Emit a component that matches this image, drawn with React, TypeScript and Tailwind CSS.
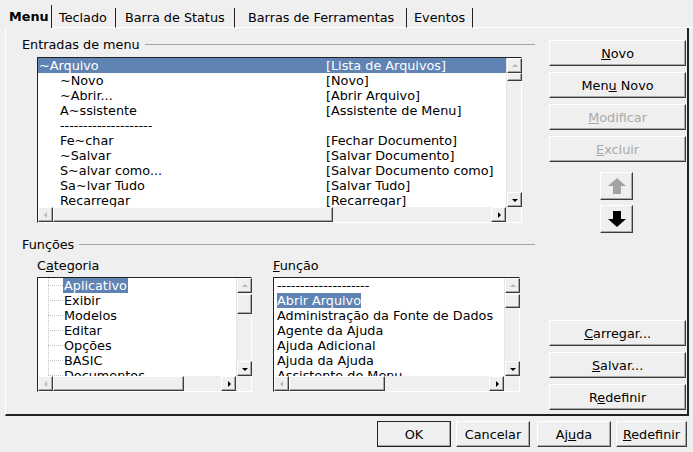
import React from "react"

const raised =
  "border border-t-white border-l-white border-b-[#3c3c3c] border-r-[#3c3c3c] shadow-[inset_-1px_-1px_0_#a8a8a8] bg-[#efefef]"

function Btn({ children, disabled, className = "" }: { children: React.ReactNode; disabled?: boolean; className?: string }) {
  return (
    <div
      className={`${raised} h-[26px] flex items-center justify-center ${disabled ? "text-[#a9a9a9]" : "text-black"} ${className}`}
    >
      <span className="whitespace-pre">{children}</span>
    </div>
  )
}

function Arrow({ dir, disabled }: { dir: "up" | "down" | "left" | "right"; disabled?: boolean }) {
  const c = disabled ? "#b8b8b8" : "#000"
  const pts = {
    up: "2,6 5,3 8,6",
    down: "2,4 8,4 5,7",
    left: "6,2 6,8 3,5",
    right: "4,2 4,8 7,5",
  }[dir]
  return (
    <div className={`${raised} w-[15px] h-[15px] flex items-center justify-center shrink-0`}>
      <svg width="10" height="10" viewBox="0 0 10 10">
        <polygon points={pts} fill={c} />
      </svg>
    </div>
  )
}

function VScroll({ thumbTop, thumbH }: { thumbTop: number; thumbH: number }) {
  return (
    <div className="w-[15px] flex flex-col bg-[#efefef] border-l border-[#e4e4e4]">
      <Arrow dir="up" disabled />
      <div className="flex-1 relative">
        <div className={`${raised} absolute left-0 w-[15px]`} style={{ top: thumbTop, height: thumbH }} />
      </div>
      <Arrow dir="down" />
    </div>
  )
}

function HScroll({ thumbW }: { thumbW: number }) {
  return (
    <div className="h-[15px] flex bg-[#efefef]">
      <Arrow dir="left" disabled />
      <div className="flex-1 flex">
        <div className={`${raised} h-[15px]`} style={{ width: thumbW }} />
      </div>
      <Arrow dir="right" />
      <div className="w-[15px] shrink-0" />
    </div>
  )
}

function ListBox({
  w,
  h,
  thumbTop,
  thumbH,
  hThumb,
  children,
}: {
  w: number
  h: number
  thumbTop: number
  thumbH: number
  hThumb: number
  children: React.ReactNode
}) {
  return (
    <div
      className="border border-t-[#222] border-l-[#222] border-b-white border-r-white bg-white flex flex-col"
      style={{ width: w, height: h }}
    >
      <div className="flex-1 flex min-h-0">
        <div className="flex-1 overflow-hidden">{children}</div>
        <VScroll thumbTop={thumbTop} thumbH={thumbH} />
      </div>
      <HScroll thumbW={hThumb} />
    </div>
  )
}

const menuRows: [string, string, boolean][] = [
  ["~Arquivo", "[Lista de Arquivos]", false],
  ["~Novo", "[Novo]", true],
  ["~Abrir...", "[Abrir Arquivo]", true],
  ["A~ssistente", "[Assistente de Menu]", true],
  ["--------------------", "", true],
  ["Fe~char", "[Fechar Documento]", true],
  ["~Salvar", "[Salvar Documento]", true],
  ["S~alvar como...", "[Salvar Documento como]", true],
  ["Sa~lvar Tudo", "[Salvar Tudo]", true],
  ["Recarregar", "[Recarregar]", true],
]

const categories = ["Aplicativo", "Exibir", "Modelos", "Editar", "Opções", "BASIC", "Documentos"]
const functions = [
  "--------------------",
  "Abrir Arquivo",
  "Administração da Fonte de Dados",
  "Agente da Ajuda",
  "Ajuda Adicional",
  "Ajuda da Ajuda",
  "Assistente de Menu",
]

function Section({ title, children }: { title: string; children: React.ReactNode }) {
  return (
    <div>
      <div className="flex items-center gap-[5px] h-[14px]">
        <span>{title}</span>
        <div className="flex-1 h-0 border-t border-[#a5a5a5]" />
      </div>
      {children}
    </div>
  )
}

const tabCls = "h-[20px] flex items-center border-r border-[#222] border-b border-b-white whitespace-nowrap"

export default function App() {
  return (
    <div
      className="w-[693px] h-[452px] bg-[#efefef] text-black text-[12.8px] leading-[15px] relative overflow-hidden"
      style={{ fontFamily: '"DejaVu Sans", Verdana, sans-serif' }}
    >
      {/* Tabs */}
      <div className="flex items-end h-[28px] pl-[4px] pt-[5px]">
        <div className="h-[23px] w-[48px] pl-[5px] flex items-center font-bold border-r border-[#222] relative z-10 bg-[#efefef]">
          Menu
        </div>
        <div className={`${tabCls} w-[64px] pl-[7px]`}>Teclado</div>
        <div className={`${tabCls} w-[119px] pl-[9px]`}>Barra de Status</div>
        <div className={`${tabCls} w-[172px] pl-[13px]`}>Barras de Ferramentas</div>
        <div className={`${tabCls} w-[66px] pl-[7px]`}>Eventos</div>
        <div className="flex-1 border-b border-white h-[20px]" />
      </div>

      {/* Panel */}
      <div className="mx-[5px] w-[684px] h-[388px] border-l border-l-white border-b-2 border-r-2 border-b-[#222] border-r-[#222] flex pl-[16px] pt-[9px] pr-[1px]">
        <div className="w-[514px] flex flex-col">
          <Section title="Entradas de menu">
            <div className="pl-[15px] pt-[6px]">
              <ListBox w={485} h={166} thumbTop={0} thumbH={8} hThumb={280}>
                {menuRows.map(([a, b, ind], i) => (
                  <div
                    key={i}
                    className={`flex h-[15px] whitespace-nowrap ${i === 0 ? "bg-[#5f84b4] text-white" : ""}`}
                  >
                    <span className={`${ind ? "pl-[22px] w-[288px]" : "pl-[1px] w-[288px]"}`}>{a}</span>
                    <span>{b}</span>
                  </div>
                ))}
              </ListBox>
            </div>
          </Section>

          <div className="mt-[14px]">
            <Section title="Funções">
              <div className="flex pl-[15px] pt-[7px] gap-[21px]">
                <div>
                  <div className="h-[14px] mb-[5px]">
                    C<u>a</u>tegoria
                  </div>
                  <ListBox w={215} h={115} thumbTop={1} thumbH={20} hThumb={131}>
                    <div className="relative">
                      <div className="absolute left-[10px] top-0 h-[105px] border-l border-dotted border-[#c4c4c4]" />
                      {categories.map((c, i) => (
                        <div key={c} className="flex items-center h-[15px] whitespace-nowrap">
                          <div className="ml-[10px] w-[15px] border-t border-dotted border-[#c4c4c4]" />
                          <span className={i === 0 ? "bg-[#5f84b4] text-white px-[1px]" : "px-[1px]"}>{c}</span>
                        </div>
                      ))}
                    </div>
                  </ListBox>
                </div>
                <div>
                  <div className="h-[14px] mb-[5px]">
                    <u>F</u>unção
                  </div>
                  <ListBox w={247} h={115} thumbTop={1} thumbH={14} hThumb={96}>
                    {functions.map((f, i) => (
                      <div key={f} className="h-[15px] whitespace-nowrap pl-[3px]">
                        <span className={i === 1 ? "bg-[#5f84b4] text-white" : ""}>{f}</span>
                      </div>
                    ))}
                  </ListBox>
                </div>
              </div>
            </Section>
          </div>
        </div>

        {/* Right buttons */}
        <div className="ml-[14px] w-[137px] flex flex-col pt-[3px]">
          <div className="flex flex-col gap-[6px]">
            <Btn>
              <u>N</u>ovo
            </Btn>
            <Btn>
              Men<u>u</u> Novo
            </Btn>
            <Btn disabled>
              <u>M</u>odificar
            </Btn>
            <Btn disabled>
              <u>E</u>xcluir
            </Btn>
          </div>
          <div className="flex flex-col items-center gap-[5px] mt-[10px] pr-[2px]">
            <div className={`${raised} w-[33px] h-[28px] flex items-center justify-center`}>
              <svg width="20" height="18" viewBox="0 0 20 18">
                <polygon points="10,1 19,9 14,9 14,17 6,17 6,9 1,9" fill="#a3a3a3" />
              </svg>
            </div>
            <div className={`${raised} w-[33px] h-[28px] flex items-center justify-center`}>
              <svg width="20" height="18" viewBox="0 0 20 18">
                <polygon points="6,1 14,1 14,9 19,9 10,17 1,9 6,9" fill="#000" />
              </svg>
            </div>
          </div>
          <div className="flex-1" />
          <div className="flex flex-col gap-[6px] pb-[4px]">
            <Btn>
              <u>C</u>arregar...
            </Btn>
            <Btn>
              <u>S</u>alvar...
            </Btn>
            <Btn>
              R<u>e</u>definir
            </Btn>
          </div>
        </div>
      </div>

      {/* Bottom buttons */}
      <div className="flex justify-end gap-[5px] pr-[6px] pt-[5px]">
        <Btn className="w-[74px] !border-[#222]">OK</Btn>
        <Btn className="w-[74px]">Cancelar</Btn>
        <Btn className="w-[74px] ml-[2px]">
          Aj<u>u</u>da
        </Btn>
        <Btn className="w-[71px]">
          <u>R</u>edefinir
        </Btn>
      </div>
    </div>
  )
}
